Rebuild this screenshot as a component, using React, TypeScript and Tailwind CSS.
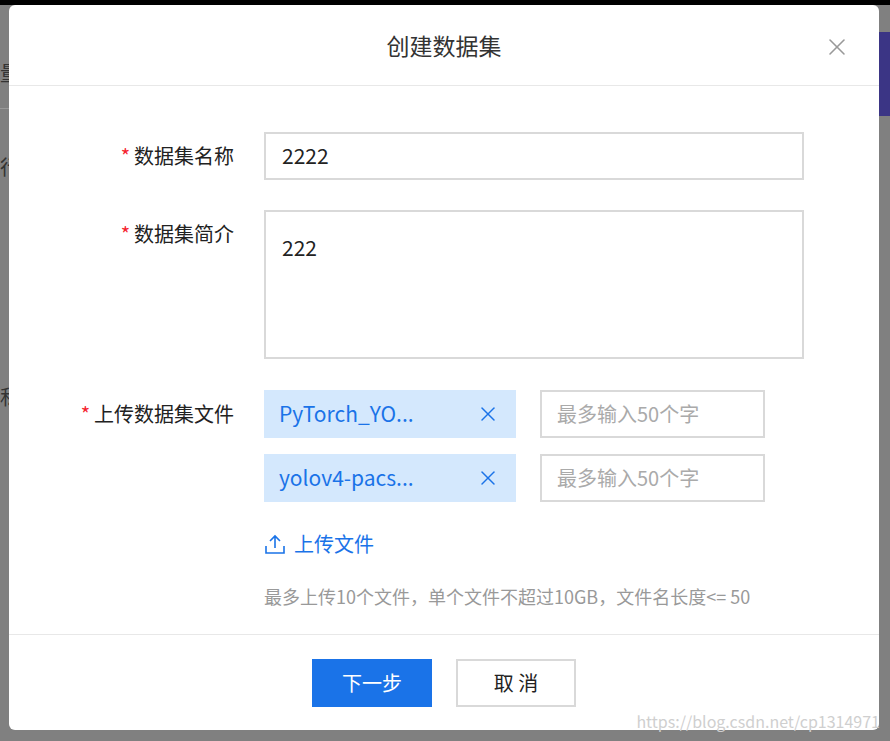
import { X } from 'lucide-react';

const font = { fontFamily: '"Noto Sans CJK SC", "Noto Sans", sans-serif' };

function Label({ text }: { text: string }) {
  return (
    <div className="w-[255px] shrink-0 pr-[30px] text-right text-[20px] leading-[48px] text-[#222]">
      <span className="mr-1 text-[#f5222d]">*</span>
      {text}
    </div>
  );
}

function FileRow({ name }: { name: string }) {
  return (
    <div className="flex gap-6">
      <div className="flex h-12 w-[252px] items-center justify-between bg-[#d4e8fd] pl-[15px] pr-4 text-[21px] text-[#1a73e8]">
        <span>{name}</span>
        <X className="h-6 w-6" strokeWidth={1.5} />
      </div>
      <div className="flex h-12 w-[225px] items-center border-2 border-[#d9d9d9] px-[15px] text-[20px] text-[#aaa]">
        最多输入50个字
      </div>
    </div>
  );
}

export default function App() {
  return (
    <div className="relative h-[741px] w-[890px] overflow-hidden bg-[#808080]" style={font}>
      <div className="h-[5px] bg-black" />
      <div className="absolute right-0 top-[32px] h-[84px] w-[11px] bg-[#3b3585]" />
      <div className="absolute left-0 top-[58px] text-[20px] text-[#333]">量</div>
      <div className="absolute left-0 top-[108px] h-px w-[9px] bg-[#999]" />
      <div className="absolute left-0 top-[152px] text-[20px] text-[#333]">行</div>
      <div className="absolute left-0 top-[382px] text-[20px] text-[#333]">私</div>

      <div className="absolute left-[9px] top-[5px] flex h-[725px] w-[870px] flex-col rounded-[6px] bg-white">
        <div className="relative flex h-[81px] items-center justify-center border-b border-[#e8e8e8] text-[23px] text-[#333]">
          创建数据集
          <X className="absolute right-[28px] top-[28px] h-7 w-7 text-[#999]" strokeWidth={1.3} />
        </div>

        <div className="flex flex-1 flex-col pt-[46px]">
          <div className="flex">
            <Label text="数据集名称" />
            <div className="flex h-12 w-[540px] items-center border-2 border-[#d9d9d9] px-[16px] text-[21px] text-[#222]">2222</div>
          </div>
          <div className="mt-[30px] flex">
            <Label text="数据集简介" />
            <div className="h-[149px] w-[540px] border-2 border-[#d9d9d9] px-[16px] pt-[20px] text-[21px] text-[#222]">222</div>
          </div>
          <div className="mt-[31px] flex">
            <Label text="上传数据集文件" />
            <div className="flex flex-col gap-4">
              <FileRow name="PyTorch_YO..." />
              <FileRow name="yolov4-pacs..." />
              <div className="mt-[11px] flex items-center gap-2 text-[20px] text-[#1a73e8]">
                <svg width="22" height="22" viewBox="0 0 22 22" fill="none" stroke="currentColor" strokeWidth="1.6">
                  <path d="M2 13v7h18v-7M11 15V3M6 8l5-5 5 5" />
                </svg>
                上传文件
              </div>
              <div className="mt-[8px] text-[18px] text-[#999]">最多上传10个文件，单个文件不超过10GB，文件名长度&lt;= 50</div>
            </div>
          </div>
        </div>

        <div className="flex h-[96px] items-center justify-center gap-6 border-t border-[#e8e8e8]">
          <div className="flex h-12 w-[120px] items-center justify-center bg-[#1a73e8] text-[20px] text-white">下一步</div>
          <div className="flex h-12 w-[120px] items-center justify-center border-2 border-[#d9d9d9] text-[20px] text-[#222]">取 消</div>
        </div>
      </div>
      <div className="absolute bottom-[8px] right-[10px] text-[16px] text-[#cfcfcf]">https://blog.csdn.net/cp1314971</div>
    </div>
  );
}
